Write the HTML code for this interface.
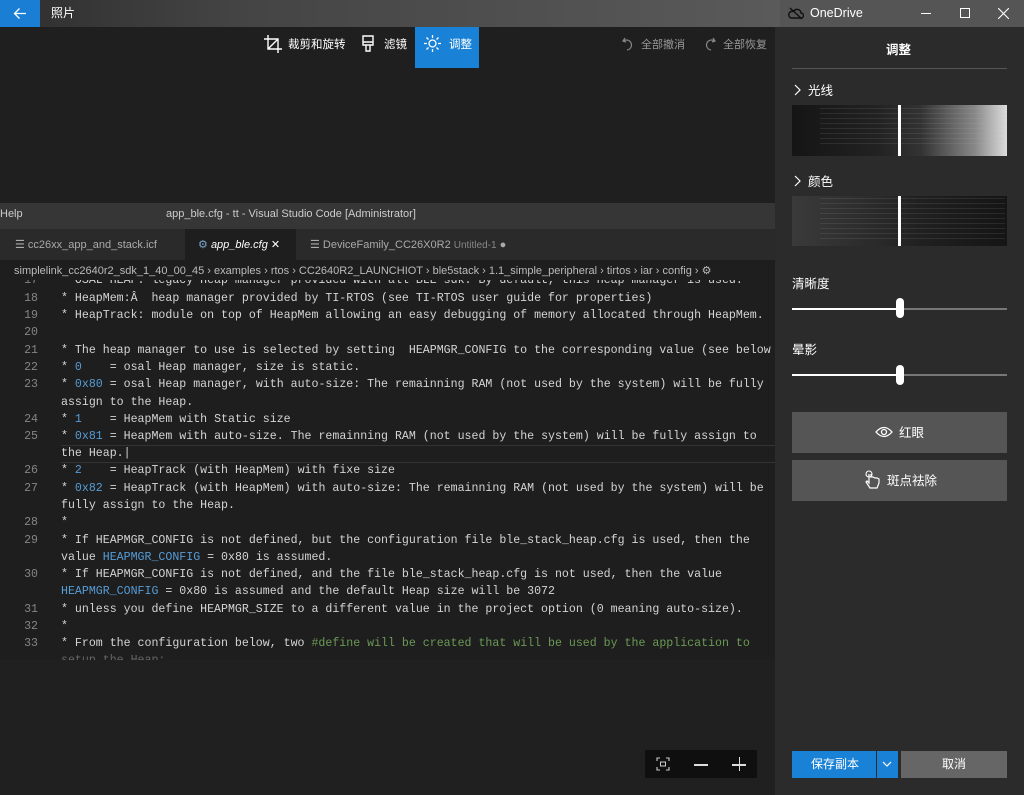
<!DOCTYPE html>
<html><head><meta charset="utf-8">
<style>
*{margin:0;padding:0;box-sizing:border-box}
body{width:1024px;height:795px;overflow:hidden;background:#202020;font-family:"Liberation Sans","Noto Sans CJK SC",sans-serif;color:#fff;position:relative}
.abs{position:absolute}
.cn{font-family:"Liberation Sans","Noto Sans CJK SC",sans-serif;transform:translateY(-2px)}
.code{font-family:"Liberation Mono","DejaVu Sans Mono",monospace;font-size:11.6px;color:#d4d4d4;white-space:pre}
.ln{position:absolute;left:0;width:38px;text-align:right;color:#858585}
.tx{position:absolute;left:61px}
.b{color:#569cd6}.g{color:#6a9955}
</style></head><body>
<div class="abs" style="left:0;top:0;width:780px;height:27px;background:linear-gradient(90deg,#2e2e2e 0%,#444 30%,#5a5a5a 100%)"></div>
<div class="abs" style="left:0;top:0;width:40px;height:27px;background:#1a7fd4"></div>
<svg class="abs" style="left:13px;top:7px" width="14" height="13" viewBox="0 0 14 13"><path d="M13 6.5H1.5M6.5 1.5L1.5 6.5l5 5" stroke="#fff" stroke-width="1.3" fill="none"/></svg>
<div class="abs cn" style="left:51px;top:6px;font-size:12px">照片</div>
<div class="abs" style="left:780px;top:0;width:244px;height:27px;background:#555"></div>
<svg class="abs" style="left:788px;top:7px" width="16" height="13" viewBox="0 0 16 13"><path d="M3 11h10a2.5 2.5 0 0 0 0-5 4 4 0 0 0-7.5-1.5A3 3 0 0 0 3 11z" stroke="#111" stroke-width="1.4" fill="none"/><path d="M2 1l12 11" stroke="#111" stroke-width="1.4"/></svg>
<div class="abs" style="left:810px;top:6px;font-size:12.5px">OneDrive</div>
<div class="abs" style="left:921px;top:13px;width:10px;height:1px;background:#fff"></div>
<div class="abs" style="left:960px;top:8px;width:10px;height:10px;border:1px solid #fff"></div>
<svg class="abs" style="left:998px;top:8px" width="11" height="11"><path d="M0 0L11 11M11 0L0 11" stroke="#fff" stroke-width="1.1"/></svg>
<div class="abs" style="left:0;top:27px;width:775px;height:176px;background:#1f1f1f"></div>
<svg class="abs" style="left:264px;top:35px" width="18" height="18" viewBox="0 0 18 18"><path d="M4 0v14h14M0 4h14v14M4 14L14 4" stroke="#fff" stroke-width="1.4" fill="none"/></svg>
<div class="abs cn" style="left:288px;top:38px;font-size:11.5px">裁剪和旋转</div>
<svg class="abs" style="left:362px;top:35px" width="12" height="18" viewBox="0 0 12 18"><path d="M1 1h10v9H1zM1 7h10M4 10v6h4v-6" stroke="#fff" stroke-width="1.4" fill="none"/></svg>
<div class="abs cn" style="left:384px;top:38px;font-size:11.5px">滤镜</div>
<div class="abs" style="left:415px;top:27px;width:64px;height:41px;background:#1a82d6"></div>
<svg class="abs" style="left:424px;top:35px" width="17" height="17" viewBox="0 0 17 17"><circle cx="8.5" cy="8.5" r="3.5" stroke="#fff" stroke-width="1.3" fill="none"/><path d="M8.5 0v3M8.5 14v3M0 8.5h3M14 8.5h3M2.5 2.5l2 2M12.5 12.5l2 2M2.5 14.5l2-2M12.5 4.5l2-2" stroke="#fff" stroke-width="1.3"/></svg>
<div class="abs cn" style="left:449px;top:38px;font-size:11.5px">调整</div>
<svg class="abs" style="left:622px;top:37px" width="12" height="14" viewBox="0 0 12 14"><path d="M3 1L1 4l3 1M1.5 4A5 5 0 1 1 5 13" stroke="#888" stroke-width="1.2" fill="none"/></svg>
<div class="abs cn" style="left:641px;top:38px;font-size:11px;color:#999">全部撤消</div>
<svg class="abs" style="left:704px;top:37px" width="12" height="14" viewBox="0 0 12 14"><path d="M9 1l2 3-3 1M10.5 4A5 5 0 1 0 7 13" stroke="#888" stroke-width="1.2" fill="none"/></svg>
<div class="abs cn" style="left:723px;top:38px;font-size:11px;color:#999">全部恢复</div>
<div class="abs" style="left:0;top:203px;width:775px;height:26px;background:#363636"></div>
<div class="abs" style="left:0;top:208px;font-size:11px;color:#ccc">Help</div>
<div class="abs" style="left:166px;top:208px;font-size:11px;color:#ccc">app_ble.cfg - tt - Visual Studio Code [Administrator]</div>
<div class="abs" style="left:0;top:229px;width:775px;height:31px;background:#2a2a2b"></div>
<div class="abs" style="left:185px;top:229px;width:111px;height:31px;background:#1e1e1e"></div>
<div class="abs" style="left:15px;top:238px;font-size:11px;color:#aaa">☰ cc26xx_app_and_stack.icf</div>
<div class="abs" style="left:198px;top:238px;font-size:11px;color:#fff"><span style="color:#7aa3c8">⚙</span> <i>app_ble.cfg</i> ✕</div>
<div class="abs" style="left:310px;top:238px;font-size:11px;color:#aaa">☰ DeviceFamily_CC26X0R2 <span style="font-size:10px;color:#888">Untitled-1</span> ●</div>
<div class="abs" style="left:0;top:260px;width:775px;height:20px;background:#1e1e1e"></div>
<div class="abs" style="left:14px;top:264px;font-size:11px;color:#bbb;white-space:nowrap">simplelink_cc2640r2_sdk_1_40_00_45 › examples › rtos › CC2640R2_LAUNCHIOT › ble5stack › 1.1_simple_peripheral › tirtos › iar › config › ⚙</div>
<div class="abs code" style="left:0;top:280px;width:775px;height:380px;background:#1e1e1e;overflow:hidden">
<div class="ln" style="top:-6px">17</div><div class="tx" style="top:-6px">* OSAL HEAP: legacy Heap manager provided with all BLE sdk. By default, this Heap manager is used.</div>
<div class="ln" style="top:12px">18</div><div class="tx" style="top:12px">* HeapMem:Â  heap manager provided by TI-RTOS (see TI-RTOS user guide for properties)</div>
<div class="ln" style="top:29px">19</div><div class="tx" style="top:29px">* HeapTrack: module on top of HeapMem allowing an easy debugging of memory allocated through HeapMem.</div>
<div class="ln" style="top:46px">20</div>
<div class="ln" style="top:64px">21</div><div class="tx" style="top:64px">* The heap manager to use is selected by setting  HEAPMGR_CONFIG to the corresponding value (see below</div>
<div class="ln" style="top:81px">22</div><div class="tx" style="top:81px">* <span class="b">0</span>    = osal Heap manager, size is static.</div>
<div class="ln" style="top:98px">23</div><div class="tx" style="top:98px">* <span class="b">0x80</span> = osal Heap manager, with auto-size: The remainning RAM (not used by the system) will be fully</div>
<div class="tx" style="top:116px">assign to the Heap.</div>
<div class="ln" style="top:133px">24</div><div class="tx" style="top:133px">* <span class="b">1</span>    = HeapMem with Static size</div>
<div class="ln" style="top:150px">25</div><div class="tx" style="top:150px">* <span class="b">0x81</span> = HeapMem with auto-size. The remainning RAM (not used by the system) will be fully assign to</div>
<div class="abs" style="left:61px;top:165px;width:714px;height:18px;border-top:1px solid #333;border-bottom:1px solid #333"></div>
<div class="tx" style="top:167px">the Heap.|</div>
<div class="ln" style="top:184px">26</div><div class="tx" style="top:184px">* <span class="b">2</span>    = HeapTrack (with HeapMem) with fixe size</div>
<div class="ln" style="top:202px">27</div><div class="tx" style="top:202px">* <span class="b">0x82</span> = HeapTrack (with HeapMem) with auto-size: The remainning RAM (not used by the system) will be</div>
<div class="tx" style="top:219px">fully assign to the Heap.</div>
<div class="ln" style="top:236px">28</div><div class="tx" style="top:236px">*</div>
<div class="ln" style="top:254px">29</div><div class="tx" style="top:254px">* If HEAPMGR_CONFIG is not defined, but the configuration file ble_stack_heap.cfg is used, then the</div>
<div class="tx" style="top:271px">value <span class="b">HEAPMGR_CONFIG</span> = 0x80 is assumed.</div>
<div class="ln" style="top:288px">30</div><div class="tx" style="top:288px">* If HEAPMGR_CONFIG is not defined, and the file ble_stack_heap.cfg is not used, then the value</div>
<div class="tx" style="top:305px"><span class="b">HEAPMGR_CONFIG</span> = 0x80 is assumed and the default Heap size will be 3072</div>
<div class="ln" style="top:323px">31</div><div class="tx" style="top:323px">* unless you define HEAPMGR_SIZE to a different value in the project option (0 meaning auto-size).</div>
<div class="ln" style="top:340px">32</div><div class="tx" style="top:340px">*</div>
<div class="ln" style="top:357px">33</div><div class="tx" style="top:357px">* From the configuration below, two <span class="g">#define will be created that will be used by the application to</span></div>
<div class="tx" style="top:374px;color:#666">setup the Heap:</div>
</div>
<div class="abs" style="left:645px;top:750px;width:112px;height:28px;background:#0f0f0f"></div>
<svg class="abs" style="left:656px;top:757px" width="14" height="14" viewBox="0 0 14 14"><path d="M1 4V1h3M10 1h3v3M13 10v3h-3M4 13H1v-3" stroke="#ccc" stroke-width="1.1" fill="none"/><rect x="4.5" y="5" width="5" height="4" stroke="#ccc" fill="none"/></svg>
<div class="abs" style="left:694px;top:764px;width:14px;height:1.5px;background:#ddd"></div>
<div class="abs" style="left:732px;top:764px;width:14px;height:1.5px;background:#ddd"></div>
<div class="abs" style="left:738.5px;top:757px;width:1.5px;height:14px;background:#ddd"></div>
<div class="abs" style="left:775px;top:27px;width:249px;height:768px;background:#2b2b2b"></div>
<div class="abs cn" style="left:886px;top:41px;font-size:12.5px;font-weight:bold">调整</div>
<div class="abs" style="left:792px;top:68px;width:215px;height:1px;background:#555"></div>
<svg class="abs" style="left:794px;top:84px" width="7" height="12"><path d="M1 1l5 5-5 5" stroke="#fff" stroke-width="1.2" fill="none"/></svg>
<div class="abs cn" style="left:808px;top:82px;font-size:12.5px">光线</div>
<div class="abs" style="left:792px;top:105px;width:215px;height:51px;background:linear-gradient(90deg,#151515 0%,#222 40%,#333 60%,#888 85%,#ddd 100%)"></div>
<div class="abs" style="left:820px;top:108px;width:185px;height:40px;background:repeating-linear-gradient(180deg,rgba(180,180,180,.12) 0 1px,transparent 1px 5px)"></div>
<div class="abs" style="left:898px;top:105px;width:3px;height:51px;background:#fff"></div>
<svg class="abs" style="left:794px;top:175px" width="7" height="12"><path d="M1 1l5 5-5 5" stroke="#fff" stroke-width="1.2" fill="none"/></svg>
<div class="abs cn" style="left:808px;top:173px;font-size:12.5px">颜色</div>
<div class="abs" style="left:792px;top:196px;width:215px;height:50px;background:linear-gradient(90deg,#3a3a3a 0%,#2a2a2a 40%,#202020 60%,#151515 100%)"></div>
<div class="abs" style="left:820px;top:198px;width:185px;height:42px;background:repeating-linear-gradient(180deg,rgba(180,180,180,.12) 0 1px,transparent 1px 5px)"></div>
<div class="abs" style="left:898px;top:196px;width:3px;height:50px;background:#fff"></div>
<div class="abs cn" style="left:792px;top:275px;font-size:12.5px">清晰度</div>
<div class="abs" style="left:792px;top:308px;width:108px;height:2px;background:#fff"></div>
<div class="abs" style="left:900px;top:308px;width:107px;height:2px;background:#777"></div>
<div class="abs" style="left:896px;top:298px;width:8px;height:20px;border-radius:4px;background:#fff"></div>
<div class="abs cn" style="left:792px;top:341px;font-size:12.5px">晕影</div>
<div class="abs" style="left:792px;top:374px;width:108px;height:2px;background:#fff"></div>
<div class="abs" style="left:900px;top:374px;width:107px;height:2px;background:#777"></div>
<div class="abs" style="left:896px;top:365px;width:8px;height:20px;border-radius:4px;background:#fff"></div>
<div class="abs" style="left:792px;top:412px;width:215px;height:41px;background:#555"></div>
<svg class="abs" style="left:875px;top:426px" width="18" height="12" viewBox="0 0 18 12"><path d="M1 6Q9-3 17 6Q9 15 1 6z" stroke="#fff" stroke-width="1.3" fill="none"/><circle cx="9" cy="6" r="2.5" stroke="#fff" stroke-width="1.3" fill="none"/></svg>
<div class="abs cn" style="left:899px;top:424px;font-size:12.5px">红眼</div>
<div class="abs" style="left:792px;top:460px;width:215px;height:41px;background:#555"></div>
<svg class="abs" style="left:864px;top:470px" width="16" height="20" viewBox="0 0 16 20"><circle cx="5" cy="4" r="3" stroke="#fff" stroke-width="1.1" fill="none"/><path d="M5 4v9l-2-2-1 1 4 6h7l2-5v-4l-2-1-2 0-2-1-2 0V4" stroke="#fff" stroke-width="1.2" fill="none"/></svg>
<div class="abs cn" style="left:887px;top:472px;font-size:12.5px">斑点祛除</div>
<div class="abs" style="left:792px;top:751px;width:84px;height:27px;background:#1a82d6"></div>
<div class="abs cn" style="left:811px;top:757px;font-size:12px">保存副本</div>
<div class="abs" style="left:877px;top:751px;width:21px;height:27px;background:#1a82d6"></div>
<svg class="abs" style="left:882px;top:761px" width="10" height="6"><path d="M1 1l4 4 4-4" stroke="#fff" stroke-width="1.2" fill="none"/></svg>
<div class="abs" style="left:901px;top:751px;width:106px;height:27px;background:#666"></div>
<div class="abs cn" style="left:942px;top:757px;font-size:12px">取消</div>
</body></html>
